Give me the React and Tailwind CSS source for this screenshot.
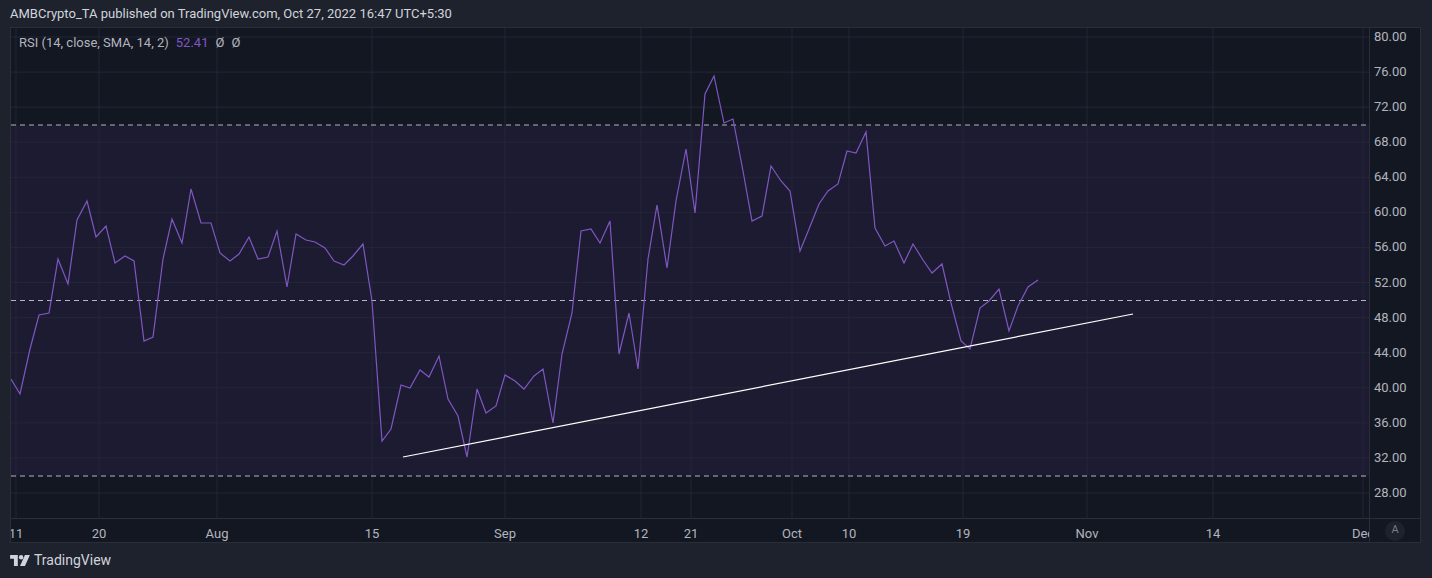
const pts = "10,378 19,393 29,348 38,314 48,312 57,258 67,283 76,219 86,200 95,236 105,225 114,262 124,255 133,260 143,340 152,336 162,258 171,218 181,242 190,188 200,222 210,222 219,252 229,260 238,253 248,236 257,258 267,256 276,230 286,286 295,233 305,239 314,241 324,247 333,260 343,264 352,255 362,243 371,300 381,440 390,428 400,384 409,387 419,369 428,376 438,355 447,398 457,415 466,456 476,388 485,412 495,405 504,374 514,380 523,388 533,375 542,368 552,422 561,353 571,312 580,230 590,228 599,242 609,220 618,353 628,312 637,368 647,258 656,204 666,267 675,200 685,148 694,212 704,93 713,75 723,122 732,118 742,170 751,220 761,215 770,165 780,180 789,190 799,250 808,228 818,203 827,190 837,183 846,150 855,152 865,131 874,227 884,245 893,240 903,262 912,243 922,259 931,272 941,263 950,302 960,340 969,348 979,307 988,300 998,288 1008,330 1017,305 1027,286 1037,279";
const yLabels = ["80.00","76.00","72.00","68.00","64.00","60.00","56.00","52.00","48.00","44.00","40.00","36.00","32.00","28.00"];
const yOf = (i) => 36 + i * 35.08;
const xs = [{x:15,t:"11"},{x:98,t:"20"},{x:216,t:"Aug"},{x:371,t:"15"},{x:504,t:"Sep"},{x:640,t:"12"},{x:690,t:"21"},{x:791,t:"Oct"},{x:848,t:"10"},{x:962,t:"19"},{x:1086,t:"Nov"},{x:1212,t:"14"},{x:1362,t:"Dec"}];

export default function App() {
  const f = { fontFamily: "Roboto, 'Liberation Sans', sans-serif" };
  return (
    <div className="w-[1432px] h-[578px] bg-[#1e222d] flex flex-col overflow-hidden" style={f}>
      <div className="h-[27px] pl-[10px] flex items-center text-[13px] text-[#d1d4dc]">AMBCrypto_TA published on TradingView.com, Oct 27, 2022 16:47 UTC+5:30</div>
      <div className="ml-[10px] w-[1411px] h-[516px] border border-[#2a2e39] bg-[#131722] grid grid-cols-[1fr_51px] grid-rows-[490px_1fr]">
        <div className="relative overflow-hidden">
          <svg className="absolute left-0 top-0" width="1360" height="490" viewBox="10 27 1360 490">
            <rect x="10" y="124" width="1360" height="351" fill="#1d1b31" />
            {yLabels.map((_, i) => <line key={i} x1="10" x2="1370" y1={yOf(i)} y2={yOf(i)} stroke="#232736" strokeWidth="1" />)}
            {xs.map((d) => <line key={d.x} x1={d.x} x2={d.x} y1="27" y2="517" stroke="#232736" strokeWidth="1" />)}
            {[124, 299.5, 475].map((y) => <line key={y} x1="10" x2="1370" y1={y} y2={y} stroke="#b2b5be" strokeDasharray="5 4" strokeWidth="1" />)}
            <polyline points={pts} fill="none" stroke="#7e57c2" strokeWidth="1.2" />
            <line x1="402" y1="456" x2="1132" y2="313" stroke="#ffffff" strokeWidth="1.2" />
          </svg>
          <div className="absolute left-[8px] top-[5px] text-[13px] text-[#b2b5be] flex gap-[7px]">
            <span>RSI (14, close, SMA, 14, 2)</span><span className="text-[#7e57c2]">52.41</span><span>Ø</span><span>Ø</span>
          </div>
        </div>
        <div className="relative border-l border-[#2a2e39] text-[13px] text-[#b2b5be]">
          {yLabels.map((t, i) => <div key={t} className="absolute left-[4px] leading-none" style={{ top: yOf(i) - 27 - 7 }}>{t}</div>)}
        </div>
        <div className="relative border-t border-[#2a2e39] overflow-hidden text-[13px] text-[#b2b5be]">
          {xs.map((d) => <div key={d.x} className="absolute top-[5px] -translate-x-1/2" style={{ left: d.x - 10 }}>{d.t}</div>)}
        </div>
        <div className="border-t border-l border-[#2a2e39] flex items-center justify-center">
          <div className="w-[20px] h-[20px] rounded-full bg-[#1e222d] text-[11px] text-[#787b86] flex items-center justify-center">A</div>
        </div>
      </div>
      <div className="flex-1 flex items-center pl-[10px] gap-[4px] text-[#d1d4dc] text-[14px]">
        <svg width="20" height="11" viewBox="0 0 36 20" fill="#d1d4dc"><path d="M0 0h14v20H7V7H0z"/><circle cx="20" cy="4" r="4"/><path d="M27 0h9l-9 20h-9z"/></svg>
        <span>TradingView</span>
      </div>
    </div>
  );
}
